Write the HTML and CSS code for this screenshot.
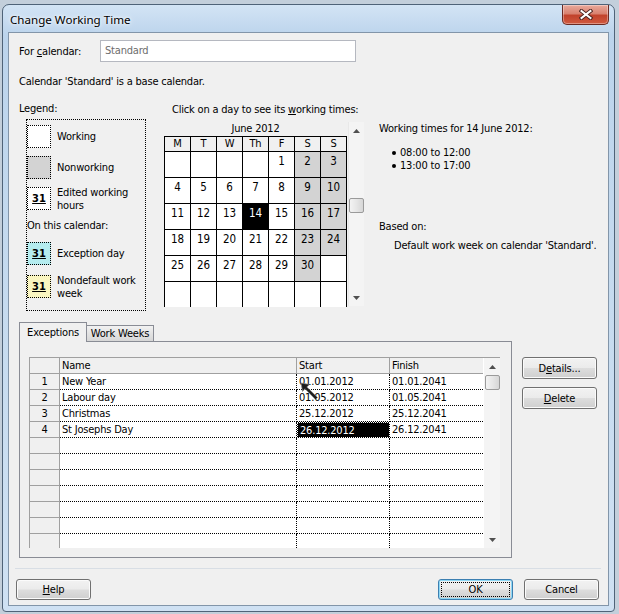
FILE: index.html
```html
<!doctype html>
<html>
<head>
<meta charset="utf-8">
<link rel="stylesheet" href="styles.css">
</head>
<body>
<div class="window">
	<div class="titlebar">
		<span class="title">Change Working Time</span>
		<div class="close-btn">
			<svg width="14" height="11" viewBox="0 0 14 11">
				<path d="M2.5 2 L11.5 9 M11.5 2 L2.5 9" stroke="#4a2420" stroke-width="4" stroke-linecap="square"/>
				<path d="M2.5 2 L11.5 9 M11.5 2 L2.5 9" stroke="#fff" stroke-width="2" stroke-linecap="square"/>
			</svg>
		</div>
	</div>

	<div class="client">
		<div class="calendar-row">
			<label class="calendar-label">For <u>c</u>alendar:</label>
			<div class="combo">Standard</div>
		</div>
		<p class="base-note">Calendar 'Standard' is a base calendar.</p>

		<div class="main">
			<div class="legend-col">
				<div class="legend-title">Legend:</div>
				<div class="legend-box">
					<div class="legend-item">
						<div class="swatch"></div>
						<span>Working</span>
					</div>
					<div class="legend-item">
						<div class="swatch nonworking"></div>
						<span>Nonworking</span>
					</div>
					<div class="legend-item">
						<div class="swatch"><span class="num31">31</span></div>
						<span>Edited working<br>hours</span>
					</div>
					<div class="legend-sub">On this calendar:</div>
					<div class="legend-item spaced">
						<div class="swatch exception"><span class="num31">31</span></div>
						<span>Exception day</span>
					</div>
					<div class="legend-item spaced">
						<div class="swatch nondefault"><span class="num31">31</span></div>
						<span>Nondefault work<br>week</span>
					</div>
				</div>
			</div>

			<div class="cal-col">
				<div class="cal-heading">Click on a day to see its <u>w</u>orking times:</div>
				<div class="cal-body">
					<div class="cal-month">
						<div class="month-name">June 2012</div>
						<div class="month-clip">
							<div class="month-grid">
								<div class="dow">M</div><div class="dow">T</div><div class="dow">W</div><div class="dow">Th</div><div class="dow">F</div><div class="dow">S</div><div class="dow">S</div>

								<div class="day"></div><div class="day"></div><div class="day"></div><div class="day"></div><div class="day">1</div><div class="day off">2</div><div class="day off">3</div>
								<div class="day">4</div><div class="day">5</div><div class="day">6</div><div class="day">7</div><div class="day">8</div><div class="day off">9</div><div class="day off">10</div>
								<div class="day">11</div><div class="day">12</div><div class="day">13</div><div class="day sel">14</div><div class="day">15</div><div class="day off">16</div><div class="day off">17</div>
								<div class="day">18</div><div class="day">19</div><div class="day">20</div><div class="day">21</div><div class="day">22</div><div class="day off">23</div><div class="day off">24</div>
								<div class="day">25</div><div class="day">26</div><div class="day">27</div><div class="day">28</div><div class="day">29</div><div class="day off">30</div><div class="day"></div>
								<div class="day"></div><div class="day"></div><div class="day"></div><div class="day"></div><div class="day"></div><div class="day"></div><div class="day"></div>
							</div>
						</div>
					</div>
					<div class="vscroll cal-scroll">
						<div class="arrow"><svg width="7" height="4"><path d="M0 4 L3.5 0 L7 4Z" fill="#505050"/></svg></div>
						<div class="thumb"></div>
						<div class="track"></div>
						<div class="arrow"><svg width="7" height="4"><path d="M0 0 L3.5 4 L7 0Z" fill="#505050"/></svg></div>
					</div>
				</div>
			</div>

			<div class="times-col">
				<div class="wt-title">Working times for 14 June 2012:</div>
				<div class="wt-list">
					<div class="wt-item"><span class="dot"></span>08:00 to 12:00</div>
					<div class="wt-item"><span class="dot"></span>13:00 to 17:00</div>
				</div>
				<div class="based-title">Based on:</div>
				<div class="based-text">Default work week on calendar 'Standard'.</div>
			</div>
		</div>

		<div class="lower">
			<div class="tabs-area">
				<div class="tab-strip">
					<div class="tab active">Exceptions</div>
					<div class="tab">Work Weeks</div>
				</div>
				<div class="tab-panel">
					<div class="xgrid">
						<div class="xtable">
							<div class="xrow head">
								<div class="rh"></div>
								<div class="c-name">Name</div>
								<div class="c-start">Start</div>
								<div class="c-finish">Finish</div>
							</div>
							<div class="xrow">
								<div class="rh">1</div>
								<div class="c-name">New Year</div>
								<div class="c-start">01.01.2012</div>
								<div class="c-finish">01.01.2041</div>
							</div>
							<div class="xrow">
								<div class="rh">2</div>
								<div class="c-name">Labour day</div>
								<div class="c-start">01.05.2012</div>
								<div class="c-finish">01.05.2041</div>
							</div>
							<div class="xrow">
								<div class="rh">3</div>
								<div class="c-name">Christmas</div>
								<div class="c-start">25.12.2012</div>
								<div class="c-finish">25.12.2041</div>
							</div>
							<div class="xrow">
								<div class="rh">4</div>
								<div class="c-name">St Josephs Day</div>
								<div class="c-start selected">26.12.2012</div>
								<div class="c-finish">26.12.2041</div>
							</div>
							<div class="xrow"><div class="rh"></div><div class="c-name"></div><div class="c-start"></div><div class="c-finish"></div></div>
							<div class="xrow"><div class="rh"></div><div class="c-name"></div><div class="c-start"></div><div class="c-finish"></div></div>
							<div class="xrow"><div class="rh"></div><div class="c-name"></div><div class="c-start"></div><div class="c-finish"></div></div>
							<div class="xrow"><div class="rh"></div><div class="c-name"></div><div class="c-start"></div><div class="c-finish"></div></div>
							<div class="xrow"><div class="rh"></div><div class="c-name"></div><div class="c-start"></div><div class="c-finish"></div></div>
							<div class="xrow"><div class="rh"></div><div class="c-name"></div><div class="c-start"></div><div class="c-finish"></div></div>
							<div class="xrow"><div class="rh"></div><div class="c-name"></div><div class="c-start"></div><div class="c-finish"></div></div>
						</div>
						<div class="vscroll grid-scroll">
							<div class="arrow"><svg width="7" height="4"><path d="M0 4 L3.5 0 L7 4Z" fill="#505050"/></svg></div>
							<div class="thumb"></div>
							<div class="track"></div>
							<div class="arrow"><svg width="7" height="4"><path d="M0 0 L3.5 4 L7 0Z" fill="#505050"/></svg></div>
						</div>
						<svg class="cursor" width="20" height="20" viewBox="0 0 20 20">
							<path d="M1 1 L9.5 2.5 L6.8 5 L17.5 15.5 L15.5 17.5 L5 6.8 L2.5 9.5 Z" fill="#1c1c1c" stroke="#8a8a8a" stroke-width="0.7"/>
						</svg>
					</div>
				</div>
			</div>
			<div class="side-buttons">
				<button class="btn">D<u>e</u>tails...</button>
				<button class="btn"><u>D</u>elete</button>
			</div>
		</div>

		<div class="separator"></div>
		<div class="footer">
			<button class="btn"><u>H</u>elp</button>
			<div class="footer-right">
				<button class="btn default">OK</button>
				<button class="btn">Cancel</button>
			</div>
		</div>
	</div>
</div>
</body>
</html>
```

FILE: styles.css
```css
* {
	box-sizing: border-box;
}

html, body {
	margin: 0;
}

body {
	width: 619px;
	height: 614px;
	overflow: hidden;
	padding: 4px 0 0 2px;
	background: #c3cfdb;
	font-family: "DejaVu Sans Condensed", "DejaVu Sans", sans-serif;
	font-size: 11px;
	line-height: 13px;
	letter-spacing: -0.2px;
	color: #000;
}

/* window frame */
.window {
	width: 613px;
	height: 608px;
	padding: 0 5px 5px 5px;
	border: 1px solid #4f6378;
	border-radius: 7px 7px 4px 4px;
	background: linear-gradient(to bottom, #d3e4f5 0, #bcd4ec 30px, #c6dbef 300px, #cfe1f3 100%);
}

.titlebar {
	height: 27px;
	display: flex;
	justify-content: space-between;
	align-items: flex-start;
}
	.title {
		padding: 7px 0 0 2px;
		font-family: "Noto Sans", "Open Sans", sans-serif;
		font-size: 11.6px;
		line-height: 15px;
		letter-spacing: 0;
		text-shadow: 0 0 6px #fff, 0 0 3px #fff;
	}
	.close-btn {
		width: 47px;
		height: 20px;
		display: flex;
		align-items: center;
		justify-content: center;
		border: 1px solid #6b2a22;
		border-top: none;
		border-radius: 0 0 5px 5px;
		background: linear-gradient(to bottom, #e9a99b 0, #d98270 45%, #c2432c 55%, #d0593f 100%);
		box-shadow: inset 0 0 0 1px rgba(255,255,255,0.35);
	}

.client {
	height: 574px;
	padding-left: 10px;
	border: 1px solid #8295a9;
	background: #f0f0f0;
}

.calendar-row {
	display: flex;
	align-items: center;
	margin-top: 7px;
	height: 22px;
}
	.calendar-label {
		width: 81px;
	}
	.combo {
		width: 256px;
		height: 22px;
		padding-left: 4px;
		border: 1px solid #b5b8c0;
		background: #fff;
		color: #6d6d6d;
		line-height: 20px;
	}

.base-note {
	margin: 13px 0 0;
}

/* legend, calendar and times */
.main {
	display: flex;
	margin-top: 14px;
}

.legend-col {
	width: 127px;
	flex-shrink: 0;
}
	.legend-box {
		width: 120px;
		height: 192px;
		margin: 4px 0 0 7px;
		padding-top: 5px;
		border: 1px dotted #000;
	}
	.legend-item {
		display: flex;
		align-items: center;
		height: 23px;
		margin-bottom: 8px;
	}
	.legend-item.spaced {
		margin: 10px 0 0;
	}
	.legend-sub {
		margin-top: 9px;
	}
	.swatch {
		width: 24px;
		height: 23px;
		margin-right: 6px;
		flex-shrink: 0;
		display: flex;
		align-items: center;
		justify-content: center;
		border: 1px dotted #000;
		background: #fff;
	}
	.swatch.nonworking {
		background: #d3d3d3;
	}
	.swatch.exception {
		background-color: #d4f5f6;
		background-image: radial-gradient(#8fe0e6 0.6px, transparent 0.8px);
		background-size: 2px 2px;
	}
	.swatch.nondefault {
		background-color: #fffde0;
		background-image: radial-gradient(#f3ec9c 0.6px, transparent 0.8px);
		background-size: 2px 2px;
	}
	.num31 {
		font-weight: bold;
		text-decoration: underline;
		font-size: 11px;
		letter-spacing: 0;
	}

.cal-col {
	width: 200px;
	flex-shrink: 0;
	margin-left: 18px;
}
	.cal-heading {
		margin: 1px 0 6px;
		padding-left: 8px;
		white-space: nowrap;
	}
	.cal-body {
		display: flex;
		height: 184px;
	}
	.month-name {
		height: 14px;
		line-height: 14px;
		text-align: center;
	}
	.month-clip {
		height: 171px;
		overflow: hidden;
	}
	.month-grid {
		display: grid;
		grid-template-columns: repeat(7, 25px);
		grid-template-rows: 14px;
		grid-auto-rows: 25px;
		gap: 1px;
		border: 1px solid #000;
		background: #000;
	}
	.dow {
		background: #f0f0f0;
		text-align: center;
		line-height: 14px;
	}
	.day {
		padding-top: 3px;
		background: #fff;
		text-align: center;
		font-size: 11.5px;
		letter-spacing: 0;
	}
	.day.off {
		background: #d3d3d3;
	}
	.day.sel {
		background: #000;
		color: #fff;
	}

.vscroll {
	display: flex;
	flex-direction: column;
	align-items: center;
	background: #f4f4f4;
}
	.vscroll .arrow {
		width: 100%;
		height: 17px;
		display: flex;
		align-items: center;
		justify-content: center;
	}
	.vscroll .thumb {
		width: 15px;
		height: 15px;
		border: 1px solid #9a9a9a;
		border-radius: 2px;
		background: linear-gradient(to right, #f3f3f3, #e6e6e6 50%, #d6d6d6);
	}
	.vscroll .track {
		flex: 1;
	}
	.cal-scroll {
		width: 16px;
		margin-left: 1px;
		border-left: 1px solid #e8e8e8;
	}
		.cal-scroll .thumb {
			margin-top: 59px;
		}

.times-col {
	margin: 20px 0 0 15px;
}
	.wt-list {
		margin-top: 11px;
		padding-left: 13px;
	}
	.wt-item {
		display: flex;
		align-items: center;
	}
	.dot {
		width: 4px;
		height: 4px;
		margin-right: 4px;
		border-radius: 50%;
		background: #000;
	}
	.based-title {
		margin-top: 48px;
	}
	.based-text {
		margin-top: 6px;
		padding-left: 15px;
	}

/* exceptions tab */
.lower {
	display: flex;
	margin-top: 11px;
}
.tabs-area {
	width: 493px;
}
	.tab-strip {
		display: flex;
		height: 19px;
	}
	.tab {
		width: 68px;
		height: 16px;
		margin-top: 3px;
		border: 1px solid #898c95;
		border-bottom: none;
		background: linear-gradient(to bottom, #f2f2f2, #e3e3e3 50%, #d7d7d7);
		text-align: center;
		line-height: 15px;
	}
	.tab.active {
		position: relative;
		z-index: 1;
		height: 20px;
		margin-top: 0;
		margin-right: -1px;
		background: #f0f0f0;
		line-height: 19px;
	}
	.tab-panel {
		height: 217px;
		padding: 15px 11px 9px 9px;
		border: 1px solid #898c95;
		background: #f0f0f0;
	}

.xgrid {
	position: relative;
	display: flex;
	width: 471px;
	height: 191px;
	overflow: hidden;
	border-left: 1px solid #a0a0a0;
	border-top: 1px solid #a0a0a0;
	background: #fff;
}
	.xtable {
		width: 453px;
		flex-shrink: 0;
	}
	.xrow {
		display: flex;
		height: 16px;
		line-height: 15px;
	}
	.xrow > div {
		height: 16px;
		padding-left: 2px;
		border-bottom: 1px dotted #000;
		white-space: nowrap;
	}
	.xrow .rh {
		width: 30px;
		padding-left: 0;
		text-align: center;
		background: #f0f0f0;
		border-right: 1px solid #a0a0a0;
		border-bottom: 1px solid #a0a0a0;
	}
	.c-name {
		width: 237px;
		border-right: 1px dotted #000;
	}
	.c-start {
		width: 93px;
		border-right: 1px dotted #000;
	}
	.c-finish {
		width: 93px;
	}
	.xrow.head > div {
		background: #f0f0f0;
		border-bottom: 1px solid #a0a0a0;
	}
	.xrow.head .c-name,
	.xrow.head .c-start {
		border-right: 1px solid #a0a0a0;
	}
	.c-start.selected {
		background: #000;
		color: #fff;
		border: 1px dotted #000;
		outline: 1px dotted #fff;
		outline-offset: -1px;
	}
	.grid-scroll {
		width: 17px;
		margin-left: 1px;
		height: 190px;
	}
	.grid-scroll .thumb {
		margin-top: 0;
	}
	.cursor {
		position: absolute;
		left: 270px;
		top: 24px;
	}

.side-buttons {
	display: flex;
	flex-direction: column;
	gap: 8px;
	margin-left: 10px;
	padding-top: 35px;
}

.btn {
	width: 75px;
	height: 22px;
	padding: 0;
	border: 1px solid #707070;
	border-radius: 3px;
	background: linear-gradient(to bottom, #f2f2f2 0, #ebebeb 48%, #dddddd 52%, #cfcfcf 100%);
	box-shadow: inset 0 0 0 1px #fbfbfb;
	font: inherit;
	letter-spacing: inherit;
	color: #000;
}
.btn.default {
	border-color: #3c7fb1;
	box-shadow: inset 0 0 0 1px #8fd8f5;
	outline: 1px dotted #000;
	outline-offset: -4px;
}

.separator {
	width: 586px;
	height: 1px;
	margin: 10px 0 0 -4px;
	background: #d8dee5;
}

.footer {
	display: flex;
	justify-content: space-between;
	width: 583px;
	margin: 10px 0 0 -3px;
}
	.footer .btn {
		height: 21px;
	}
	.footer-right {
		display: flex;
		gap: 11px;
	}
```
